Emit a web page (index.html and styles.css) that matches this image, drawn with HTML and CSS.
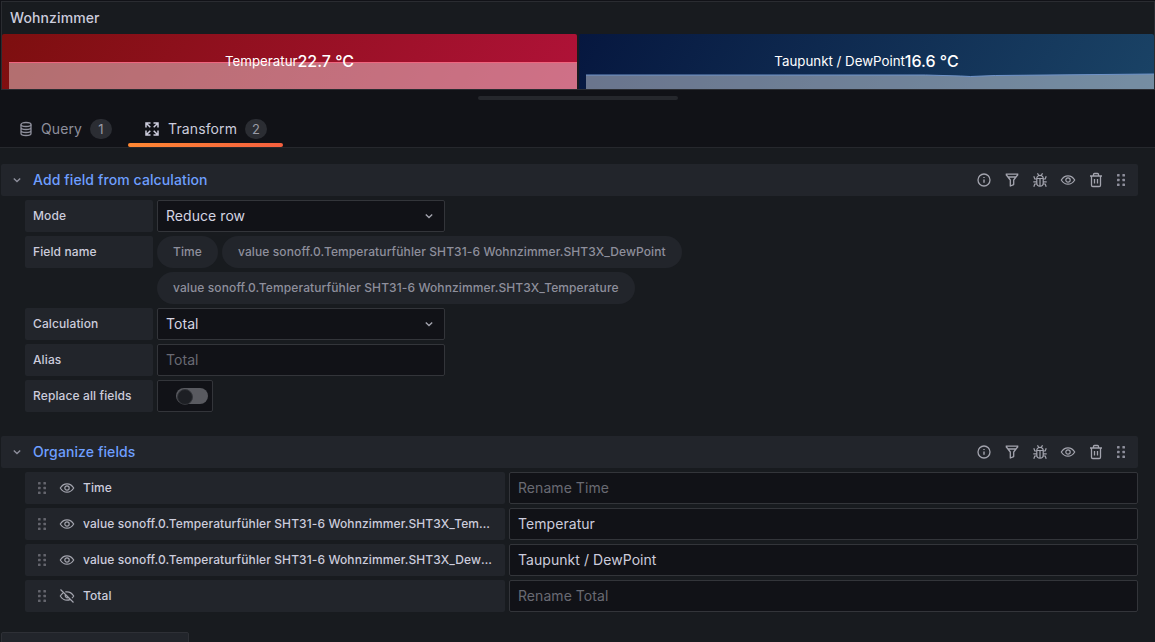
FILE: index.html
```html
<!DOCTYPE html>
<html lang="de">
<head>
<meta charset="utf-8">
<title>Wohnzimmer</title>
<link rel="stylesheet" href="styles.css">
</head>
<body>
<svg class="defs" width="0" height="0">
  <defs>
    <symbol id="i-info" viewBox="0 0 16 16"><circle cx="8" cy="8" r="6" fill="none" stroke="currentColor" stroke-width="1.3"/><path d="M8 7.5v3.2M8 5v.9" fill="none" stroke="currentColor" stroke-width="1.4"/></symbol>
    <symbol id="i-filter" viewBox="0 0 16 16"><path d="M1.700 2.200h12.600M2 2.500 6.300 8v6l3.400-1.400V8L14 2.500M3.800 5h8.400" fill="none" stroke="currentColor" stroke-width="1.3" stroke-linejoin="round"/></symbol>
    <symbol id="i-bug" viewBox="0 0 16 16"><path d="M4.800 6.500c0-2 1.400-3.200 3.200-3.200s3.200 1.200 3.200 3.200V11a3.200 3.200 0 0 1-6.400 0zM4.800 6.500h6.400M8 6.500V14M5.500 1.200l1.200 2.400M10.500 1.200 9.300 3.600M1.800 4.200l1 2.800h2M14.200 4.200l-1 2.800h-2M1.300 9.800h3.500M14.700 9.800h-3.500M1.800 14.800l1-2.800h2M14.200 14.800l-1-2.800h-2" fill="none" stroke="currentColor" stroke-width="1.200"/></symbol>
    <symbol id="i-eye" viewBox="0 0 16 16"><path d="M1.300 8C3 5.200 5.300 3.800 8 3.800s5 1.400 6.700 4.200C13 10.800 10.700 12.200 8 12.200S3 10.800 1.300 8z" fill="none" stroke="currentColor" stroke-width="1.2"/><circle cx="8" cy="8" r="2.200" fill="none" stroke="currentColor" stroke-width="1.2"/></symbol>
    <symbol id="i-eye-off" viewBox="0 0 16 16"><path d="M4 5C3 5.800 2.100 6.800 1.300 8 3 10.800 5.300 12.200 8 12.200c1.200 0 2.300-.3 3.300-.8M6.300 4C6.900 3.900 7.400 3.800 8 3.800c2.700 0 5 1.400 6.700 4.200-.5.800-1.100 1.600-1.700 2.200M6.500 6.500a2.200 2.200 0 0 0 3 3M1.500 1.500l13 13" fill="none" stroke="currentColor" stroke-width="1.2"/></symbol>
    <symbol id="i-trash" viewBox="0 0 16 16"><path d="M2 4h12M3.500 4v9.200c0 .8.600 1.300 1.300 1.300h6.400c.7 0 1.300-.5 1.300-1.300V4M5.500 4V2.500c0-.6.400-1 1-1h3c.6 0 1 .4 1 1V4M6.500 7v4.500M9.500 7v4.500" fill="none" stroke="currentColor" stroke-width="1.3"/></symbol>
    <symbol id="i-drag" viewBox="0 0 16 16"><g fill="currentColor"><rect x="4" y="2" width="2.600" height="2.600" rx=".6"/><rect x="9.400" y="2" width="2.600" height="2.600" rx=".6"/><rect x="4" y="6.700" width="2.600" height="2.600" rx=".6"/><rect x="9.400" y="6.700" width="2.600" height="2.600" rx=".6"/><rect x="4" y="11.400" width="2.600" height="2.600" rx=".6"/><rect x="9.400" y="11.400" width="2.600" height="2.600" rx=".6"/></g></symbol>
    <symbol id="i-chev" viewBox="0 0 16 16"><path d="M4.800 6.500 8 9.500l3.200-3" fill="none" stroke="currentColor" stroke-width="1.4"/></symbol>
  </defs>
</svg>

<section class="panel">
  <h2 class="panel-title">Wohnzimmer</h2>
  <div class="stats">
    <div class="stat stat-red">
      <div class="spark spark-red"></div>
      <div class="stat-text"><span class="stat-name">Temperatur</span><span class="stat-value">22.7 °C</span></div>
    </div>
    <div class="stat stat-blue">
      <svg class="spark-svg" viewBox="0 0 569 16" preserveAspectRatio="none"><path d="M0 2H340L375 3 385 3.500 410 2.500 569 1V16H0z" fill="#fff" fill-opacity=".4"/><path d="M0 2H340L375 3 385 3.500 410 2.500 569 1" fill="none" stroke="#6f94c9" stroke-width="1"/></svg>
      <div class="stat-text"><span class="stat-name">Taupunkt / DewPoint</span><span class="stat-value">16.6 °C</span></div>
    </div>
  </div>
</section>

<div class="handle-bar"><div class="handle"></div></div>

<nav class="tabs">
  <div class="tab">
    <svg class="tab-icon" viewBox="0 0 16 16"><ellipse cx="8" cy="3.500" rx="5" ry="2" fill="none" stroke="currentColor" stroke-width="1.3"/><path d="M3 3.500v9c0 1.100 2.200 2 5 2s5-.9 5-2v-9M3 6.500c0 1.100 2.200 2 5 2s5-.9 5-2M3 9.500c0 1.100 2.200 2 5 2s5-.9 5-2" fill="none" stroke="currentColor" stroke-width="1.3"/></svg>
    <span>Query</span><span class="count">1</span>
  </div>
  <div class="tab tab-active">
    <svg class="tab-icon" viewBox="0 0 16 16"><path d="M2 6.500V2h4.500M2.500 2.500l3.800 3.800M14 6.500V2H9.500M13.500 2.500 9.700 6.300M2 9.500V14h4.500M2.500 13.500l3.800-3.800M14 9.500V14H9.500M13.500 13.500 9.700 9.700" fill="none" stroke="currentColor" stroke-width="1.5"/></svg>
    <span>Transform</span><span class="count">2</span>
  </div>
</nav>

<main class="editor">
  <section class="block">
    <header class="block-head">
      <svg class="chev"><use href="#i-chev"/></svg>
      <span class="block-title">Add field from calculation</span>
      <div class="actions">
        <svg><use href="#i-info"/></svg><svg><use href="#i-filter"/></svg><svg><use href="#i-bug"/></svg><svg><use href="#i-eye"/></svg><svg><use href="#i-trash"/></svg><svg class="action-drag"><use href="#i-drag"/></svg>
      </div>
    </header>
    <div class="form">
      <div class="row"><label class="label">Mode</label><div class="input select"><span>Reduce row</span><svg class="chev"><use href="#i-chev"/></svg></div></div>
      <div class="row">
        <label class="label">Field name</label>
        <div class="pills">
          <span class="pill">Time</span>
          <span class="pill">value sonoff.0.Temperaturfühler SHT31-6 Wohnzimmer.SHT3X_DewPoint</span>
          <span class="pill">value sonoff.0.Temperaturfühler SHT31-6 Wohnzimmer.SHT3X_Temperature</span>
        </div>
      </div>
      <div class="row"><label class="label">Calculation</label><div class="input select"><span>Total</span><svg class="chev"><use href="#i-chev"/></svg></div></div>
      <div class="row"><label class="label">Alias</label><div class="input placeholder">Total</div></div>
      <div class="row"><label class="label">Replace all fields</label><div class="switch-box"><span class="switch"></span></div></div>
    </div>
  </section>

  <section class="block block-second">
    <header class="block-head">
      <svg class="chev"><use href="#i-chev"/></svg>
      <span class="block-title">Organize fields</span>
      <div class="actions">
        <svg><use href="#i-info"/></svg><svg><use href="#i-filter"/></svg><svg><use href="#i-bug"/></svg><svg><use href="#i-eye"/></svg><svg><use href="#i-trash"/></svg><svg class="action-drag"><use href="#i-drag"/></svg>
      </div>
    </header>
    <div class="form">
      <div class="field-row">
        <div class="field-name"><svg class="drag"><use href="#i-drag"/></svg><svg class="eye"><use href="#i-eye"/></svg><span class="field-text">Time</span></div>
        <div class="input grow placeholder">Rename Time</div>
      </div>
      <div class="field-row">
        <div class="field-name"><svg class="drag"><use href="#i-drag"/></svg><svg class="eye"><use href="#i-eye"/></svg><span class="field-text">value sonoff.0.Temperaturfühler SHT31-6 Wohnzimmer.SHT3X_Temperature</span></div>
        <div class="input grow">Temperatur</div>
      </div>
      <div class="field-row">
        <div class="field-name"><svg class="drag"><use href="#i-drag"/></svg><svg class="eye"><use href="#i-eye"/></svg><span class="field-text">value sonoff.0.Temperaturfühler SHT31-6 Wohnzimmer.SHT3X_DewPoint</span></div>
        <div class="input grow">Taupunkt / DewPoint</div>
      </div>
      <div class="field-row">
        <div class="field-name"><svg class="drag"><use href="#i-drag"/></svg><svg class="eye"><use href="#i-eye-off"/></svg><span class="field-text">Total</span></div>
        <div class="input grow placeholder">Rename Total</div>
      </div>
    </div>
  </section>

  <div class="add-button"></div>
</main>
</body>
</html>
```

FILE: styles.css
```css
* { box-sizing: border-box; }
html, body { height: 642px; overflow: hidden; }
body {
  margin: 0;
  background: #111217;
  color: #ccccdc;
  font-family: Inter, "Liberation Sans", sans-serif;
  font-size: 14px;
  letter-spacing: 0.0078em;
}
.defs { position: absolute; }

.panel {
  height: 89px;
  margin: 1px 0 0 1px;
  padding-top: 1px;
  background: #181b1f;
  border: 1px solid #2a2c31;
  display: flex;
  flex-direction: column;
}
.panel-title {
  margin: 0;
  height: 31px;
  padding-left: 8px;
  font-size: 14px;
  font-weight: 500;
  line-height: 30px;
  color: #ccccdc;
}
.stats { flex: 1; display: flex; gap: 2px; min-height: 0; }
.stat {
  position: relative;
  flex: 1;
  overflow: hidden;
  border-radius: 2px 2px 0 0;
  display: flex;
  justify-content: center;
  align-items: center;
}
.stat-red { background: linear-gradient(120deg, #7d0f0f, #b01238); }
.stat-blue { background: linear-gradient(120deg, #06173f, #1a4366); }
.spark { position: absolute; left: 7px; right: 0; bottom: 0; }
.spark-red {
  height: 27px;
  background: rgba(255, 255, 255, .4);
  border-top: 1px solid #f0657f;
}
.spark-svg { position: absolute; left: 7px; bottom: 0; width: calc(100% - 7px); height: 16px; }
.stat-text { position: relative; display: flex; align-items: center; color: #fff; margin-top: -2px; letter-spacing: 0; }
.stat-name { font-size: 13.3px; line-height: 20px; }
.stat-value { font-size: 16px; font-weight: 500; line-height: 20px; }

.handle-bar { height: 16px; padding-top: 6px; display: flex; justify-content: center; }
.handle { width: 200px; height: 4px; border-radius: 2px; background: #25272c; margin-left: 1px; }

.tabs {
  height: 42px;
  padding-left: 8px;
  display: flex;
  border-bottom: 1px solid #26282d;
}
.tab {
  position: relative;
  display: flex;
  align-items: center;
  height: 41px;
  padding: 4px 16px 0 10px;
  color: #8e8f9c;
}
.tab + .tab { padding-left: 16px; }
.tab-icon { width: 16px; height: 16px; margin-right: 7px; flex: none; }
.tab-active { color: #ccccdc; }
.tab-active .tab-icon { margin-right: 8px; }
.tab-active::after {
  content: "";
  position: absolute;
  left: 0; right: 0; bottom: 0;
  height: 4px;
  border-radius: 2px;
  background: linear-gradient(90deg, #ff8833, #f55f3e);
}
.count {
  margin-left: 8px;
  min-width: 22px;
  height: 20px;
  padding: 0 7px;
  border-radius: 10px;
  background: #2b2d33;
  color: #9a9ba6;
  font-size: 13px;
  line-height: 20px;
  text-align: center;
}

.editor {
  height: 495px;
  background: #181b1f;
  padding: 16px 17px 0 1px;
  overflow: hidden;
}
.block-second { margin-top: 24px; }
.block-head {
  height: 32px;
  display: flex;
  align-items: center;
  background: #22252b;
  border-radius: 2px;
  padding: 0 8px;
}
.block-head > .chev { margin-right: 8px; color: #8e8f9c; }
.chev { width: 16px; height: 16px; flex: none; }
.block-title { color: #6e9fff; font-weight: 500; font-size: 14px; position: relative; top: -1px; }
.actions { margin-left: auto; display: flex; gap: 12px; color: #a3a4ae; padding-right: 1px; }
.actions svg { width: 16px; height: 16px; display: block; }
.actions .action-drag { margin-left: -3px; color: #8e8f9c; }

.form {
  padding: 4px 0 0 24px;
  display: flex;
  flex-direction: column;
  gap: 4px;
}
.row { display: flex; gap: 4px; min-height: 32px; }
.label {
  width: 128px;
  height: 32px;
  padding-left: 8px;
  background: #22252b;
  border-radius: 2px;
  font-size: 12px;
  font-weight: 500;
  line-height: 32px;
  flex: none;
}
.input {
  width: 288px;
  height: 32px;
  padding: 0 8px;
  background: #111217;
  border: 1px solid #33353a;
  border-radius: 2px;
  color: #ccccdc;
  line-height: 30px;
  font-size: 14px;
  letter-spacing: 0.004em;
}
.select { display: flex; justify-content: space-between; align-items: center; padding-right: 7px; color: #d5d5e2; }
.select .chev { color: #a3a4ae; }
.placeholder { color: #696a73; }
.grow { flex: 1; width: auto; }

.pills { width: 540px; display: flex; flex-wrap: wrap; gap: 4px; }
.pill {
  height: 32px;
  padding: 0 16px;
  border-radius: 16px;
  background: #22252b;
  color: #8e8f9c;
  font-size: 12px;
  font-weight: 500;
  line-height: 32px;
  white-space: nowrap;
}

.switch-box {
  width: 56px;
  height: 32px;
  background: #111217;
  border: 1px solid #33353a;
  border-radius: 2px;
  display: flex;
  align-items: center;
  padding-left: 18px;
}
.switch {
  position: relative;
  width: 32px;
  height: 16px;
  border-radius: 8px;
  background: #595a60;
}
.switch::after {
  content: "";
  position: absolute;
  left: 1px; top: 1px;
  width: 14px;
  height: 14px;
  border-radius: 50%;
  background: #1d1f24;
  border: 1px solid #33353a;
}

.field-row { display: flex; gap: 4px; height: 32px; }
.field-name {
  width: 480px;
  flex: none;
  display: flex;
  align-items: center;
  background: #22252b;
  border-radius: 2px;
  padding: 0 12px 0 9px;
}
.drag { width: 16px; height: 16px; flex: none; color: #64656d; }
.eye { width: 16px; height: 16px; flex: none; margin-left: 9px; margin-right: 8px; color: #a3a4ae; }
.field-text {
  min-width: 0;
  overflow: hidden;
  text-overflow: ellipsis;
  white-space: nowrap;
  font-size: 12px;
  font-weight: 500;
  position: relative;
  top: -1px;
}

.add-button {
  width: 188px;
  height: 32px;
  margin-top: 20px;
  background: #22252b;
  border: 1px solid #2e3036;
  border-radius: 2px;
}
```
